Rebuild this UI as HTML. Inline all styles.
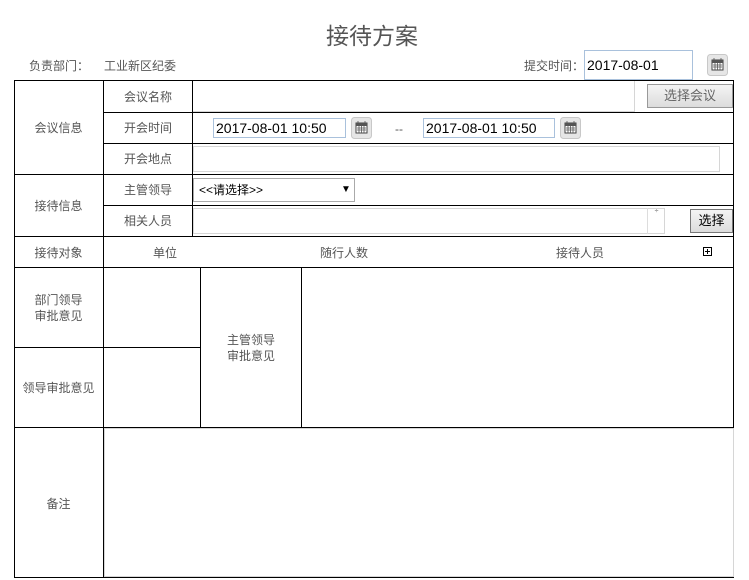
<!DOCTYPE html>
<html><head><meta charset="utf-8"><style>
*{margin:0;padding:0;box-sizing:border-box}
body{width:749px;height:580px;background:#fff;position:relative;overflow:hidden;font-family:"Liberation Sans","Noto Sans CJK SC",sans-serif;font-size:12px;color:#555}
.a{position:absolute}
.h{position:absolute;height:1px;background:#000}
.v{position:absolute;width:1px;background:#000}
.t{position:absolute;white-space:nowrap;line-height:14px}
.c{text-align:center}
.inp{position:absolute;border:1px solid #a9c1dc;background:#fff;font-size:14px;color:#000;line-height:18px;padding-left:2px}
.box{position:absolute;border:1px solid #d6d6d6;background:#fff}
.cal{position:absolute;width:21px;height:21px;border:1px solid #ccc;border-radius:3px;background:#e8e8e8}
.btn{position:absolute;border:1px solid #999;background:linear-gradient(#f4f4f4,#dcdcdc);font-size:13px;text-align:center}
</style></head><body>
<div class="t" style="left:326px;top:22px;font-size:23px;line-height:28px;color:#555">接待方案</div>
<div class="t" style="left:29px;top:59px">负责部门：</div>
<div class="t" style="left:104px;top:59px">工业新区纪委</div>
<div class="t" style="left:524px;top:59px">提交时间：</div>
<div class="inp" style="left:584px;top:50px;width:109px;height:30px;line-height:28px">2017-08-01</div>
<svg class="a" style="left:707px;top:54px" width="21" height="22" viewBox="0 0 21 22"><rect x="0.5" y="0.5" width="20" height="21" rx="3" fill="#e6e6e6" stroke="#c8c8c8"/><rect x="5" y="6" width="11" height="10" fill="#fff" stroke="#444"/><rect x="5" y="6" width="11" height="3" fill="#555"/><path d="M7 4v3M14 4v3M6 11h9M6 13h9M8 9v7M10.5 9v7M13 9v7" stroke="#555" stroke-width=".8"/></svg>

<!-- grid lines -->
<div class="h" style="left:14px;top:80px;width:720px"></div>
<div class="h" style="left:103px;top:112px;width:631px"></div>
<div class="h" style="left:103px;top:143px;width:631px"></div>
<div class="h" style="left:14px;top:174px;width:720px"></div>
<div class="h" style="left:103px;top:205px;width:631px"></div>
<div class="h" style="left:14px;top:236px;width:720px"></div>
<div class="h" style="left:14px;top:267px;width:720px"></div>
<div class="h" style="left:14px;top:347px;width:187px"></div>
<div class="h" style="left:14px;top:427px;width:720px"></div>
<div class="h" style="left:14px;top:577px;width:720px"></div>
<div class="v" style="left:14px;top:80px;height:498px"></div>
<div class="v" style="left:103px;top:80px;height:498px"></div>
<div class="v" style="left:192px;top:80px;height:156px"></div>
<div class="v" style="left:733px;top:80px;height:498px"></div>
<div class="v" style="left:200px;top:267px;height:160px"></div>
<div class="v" style="left:301px;top:267px;height:160px"></div>

<div class="t c" style="left:14px;top:121px;width:89px">会议信息</div>
<div class="t c" style="left:14px;top:199px;width:89px">接待信息</div>
<div class="t c" style="left:14px;top:246px;width:89px">接待对象</div>
<div class="t c" style="left:14px;top:292px;width:89px;line-height:16px">部门领导<br>审批意见</div>
<div class="t c" style="left:14px;top:381px;width:89px">领导审批意见</div>
<div class="t c" style="left:14px;top:497px;width:89px">备注</div>
<div class="t" style="left:124px;top:90px">会议名称</div>
<div class="t" style="left:124px;top:121px">开会时间</div>
<div class="t" style="left:124px;top:152px">开会地点</div>
<div class="t" style="left:124px;top:183px">主管领导</div>
<div class="t" style="left:124px;top:214px">相关人员</div>
<div class="t" style="left:153px;top:246px">单位</div>
<div class="t" style="left:320px;top:246px">随行人数</div>
<div class="t" style="left:556px;top:246px">接待人员</div>
<div class="a" style="left:703px;top:247px;width:9px;height:9px;border:1px solid #000"></div>
<div class="a" style="left:705px;top:251px;width:5px;height:1px;background:#000"></div>
<div class="a" style="left:707px;top:249px;width:1px;height:5px;background:#000"></div>
<div class="t c" style="left:201px;top:332px;width:100px;line-height:16px">主管领导<br>审批意见</div>

<div class="box" style="left:193px;top:81px;width:442px;height:31px;border-top:0;border-left:0"></div>
<div class="btn" style="left:647px;top:84px;width:86px;height:24px;line-height:22px;color:#666">选择会议</div>
<div class="inp" style="left:213px;top:118px;width:133px;height:20px">2017-08-01 10:50</div>
<svg class="a" style="left:351px;top:117px" width="21" height="22" viewBox="0 0 21 22"><rect x="0.5" y="0.5" width="20" height="21" rx="3" fill="#e6e6e6" stroke="#c8c8c8"/><rect x="5" y="6" width="11" height="10" fill="#fff" stroke="#444"/><rect x="5" y="6" width="11" height="3" fill="#555"/><path d="M7 4v3M14 4v3M6 11h9M6 13h9M8 9v7M10.5 9v7M13 9v7" stroke="#555" stroke-width=".8"/></svg>
<div class="t" style="left:395px;top:122px">--</div>
<div class="inp" style="left:423px;top:118px;width:132px;height:20px">2017-08-01 10:50</div>
<svg class="a" style="left:560px;top:117px" width="21" height="22" viewBox="0 0 21 22"><rect x="0.5" y="0.5" width="20" height="21" rx="3" fill="#e6e6e6" stroke="#c8c8c8"/><rect x="5" y="6" width="11" height="10" fill="#fff" stroke="#444"/><rect x="5" y="6" width="11" height="3" fill="#555"/><path d="M7 4v3M14 4v3M6 11h9M6 13h9M8 9v7M10.5 9v7M13 9v7" stroke="#555" stroke-width=".8"/></svg>
<div class="box" style="left:193px;top:146px;width:527px;height:26px"></div>
<div class="a" style="left:193px;top:178px;width:162px;height:24px;border:1px solid #aaa;background:#fff;color:#000;line-height:22px;padding-left:5px">&lt;&lt;请选择&gt;&gt;<span style="position:absolute;left:147px;font-size:10px">▼</span></div>
<div class="box" style="left:193px;top:208px;width:472px;height:26px"></div>
<div class="a" style="left:647px;top:208px;width:18px;height:26px;border-left:1px solid #ddd;font-size:7px;line-height:8px;text-align:center;color:#555">÷</div>
<div class="btn" style="left:690px;top:209px;width:43px;height:24px;line-height:22px;color:#000;border-color:#777">选择</div>
<div class="box" style="left:104px;top:428px;width:630px;height:149px"></div>
</body></html>
